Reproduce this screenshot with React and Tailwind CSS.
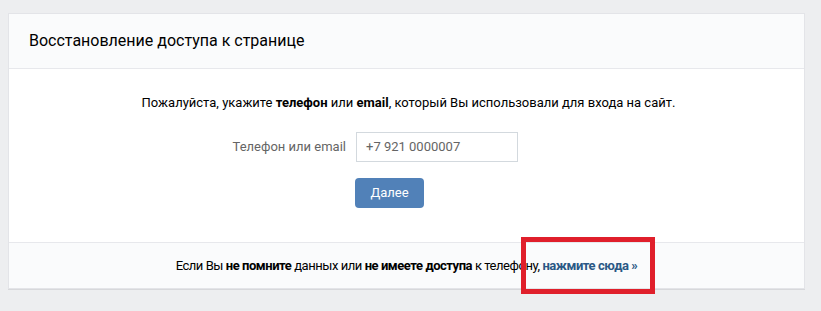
import React from 'react';

const RestoreAccess = () => {
  return (
    <div className="min-h-[311px] bg-[#edeef0] pt-[13px] pl-2 pr-[16px] font-['Roboto',sans-serif] text-[13px] text-black">
      <div className="relative border border-[#e3e4e8] bg-white shadow-[0_1px_0_0_#d7d8db]">
        {/* Header */}
        <div className="h-[55px] bg-[#fafbfc] border-b border-[#e7e8ec] flex items-center px-5">
          <h1 className="text-[16px] leading-5 text-[#000]">Восстановление доступа к странице</h1>
        </div>

        {/* Body */}
        <div className="h-[173px] pt-[26px] flex flex-col items-center">
          <p className="leading-4 pl-1">
            Пожалуйста, укажите <b className="font-bold">телефон</b> или <b className="font-bold">email</b>, который Вы использовали для входа на сайт.
          </p>
          <div className="mt-[21px] grid grid-cols-[347px_1fr] w-full items-center">
            <label className="text-right pr-[10px] text-[#656565]">Телефон или email</label>
            <div className="w-[162px] h-[30px] border border-[#d3d9de] px-[9px] flex items-center text-[#656565]">
              +7 921 0000007
            </div>
          </div>
          <div className="mt-4 grid grid-cols-[346px_1fr] w-full">
            <div />
            <button className="w-[69px] h-[30px] rounded-[4px] bg-[#5181b8] text-white text-[13px]">Далее</button>
          </div>
        </div>

        {/* Footer */}
        <div className="h-[46px] bg-[#fafbfc] border-t border-[#e7e8ec] flex items-center justify-center">
          <p className="leading-4 tracking-[-0.45px]">
            Если Вы <b className="font-bold">не помните</b> данных или <b className="font-bold">не имеете доступа</b> к телефону,{' '}
            <a className="font-bold text-[#2a5885]">нажмите сюда »</a>
          </p>
        </div>

        {/* Red highlight */}
        <div className="absolute left-[512px] top-[223px] w-[134px] h-[57px] border-[5px] border-[#e01f2b]" />
      </div>
    </div>
  );
};

export default function App() {
  return <RestoreAccess />;
}
